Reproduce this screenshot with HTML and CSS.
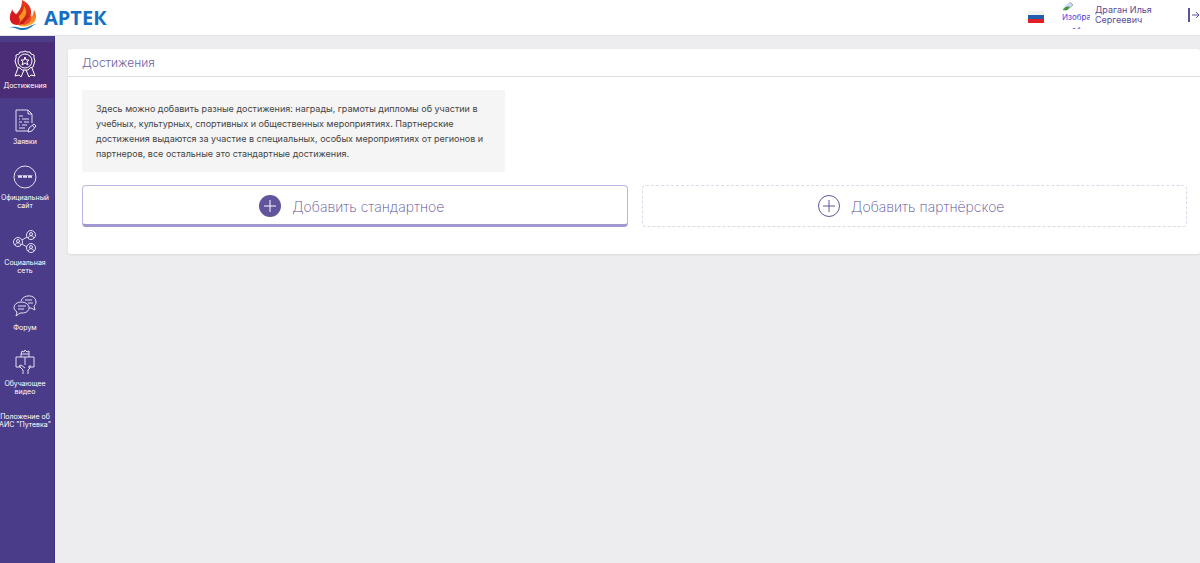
FILE: index.html
```html
<!DOCTYPE html>
<html lang="ru">
<head>
  <meta charset="UTF-8" />
  <meta name="viewport" content="width=device-width, initial-scale=1.0"/>
  <title>Достижения</title>
  <link rel="stylesheet" href="styles.css">
</head>
<body>
  <header class="header">
    <a href="#" class="logo">
      <svg class="logo-flame" width="30" height="32" viewBox="0 0 30 32">
        <defs>
          <linearGradient id="flame" x1="0" y1="0" x2="0" y2="1">
            <stop offset="0" stop-color="#e8401f"/>
            <stop offset="1" stop-color="#c4161c"/>
          </linearGradient>
          <linearGradient id="flame-light" x1="0" y1="0" x2="0" y2="1">
            <stop offset="0" stop-color="#f15a22"/>
            <stop offset="1" stop-color="#fbb034"/>
          </linearGradient>
        </defs>
        <path d="M26 10c4 6 2 13-4 15-4 2-9 2-12 0 8-1 15-6 16-15z" fill="url(#flame-light)"/>
        <path d="M14 0c8 4 11 10 8 17-2 5-6 8-12 8-5-5-4-9 0-13 3-4 4-7 4-12z" fill="url(#flame)"/>
        <path d="M16 6c4 6 2 10-2 14-2 2-3 3-3 5-3-4-1-8 2-11 2-3 3-5 3-8z" fill="#f7941d"/>
        <path d="M4 9c1 4 7 6 8 11 0 2-1 4-3 5-5 0-8-4-7-9 0-3 2-4 2-7z" fill="#d71920"/>
        <path d="M23 13c0 6-6 6-8 12 6 0 10-5 8-12z" fill="#ef4a23"/>
        <path d="M1 28c6-3 9 0 14 0 6 0 8-4 14-4-5 1-7 6-14 6-6 0-9-4-14-2z" fill="#1c75bc"/>
      </svg>
      <span class="logo-text">АРТЕК</span>
    </a>
    <div class="user">
      <a href="#" class="flag" aria-label="Русский">
        <svg width="16" height="12" viewBox="0 0 16 12">
          <rect width="16" height="12" fill="#f0f0f0"/>
          <rect y="4" width="16" height="4" fill="#1f5fae"/>
          <rect y="8" width="16" height="4" fill="#e01f26"/>
        </svg>
      </a>
      <a href="#" class="avatar">
        <svg width="16" height="10" viewBox="0 0 16 10">
          <path d="M1 9V1h7l3 3-6 5z" fill="#c9dbf3" stroke="#a9a9a9"/>
          <path d="M1 9c2-4 5-4 7-3L5 9z" fill="#3f9a35"/>
        </svg>
        <span class="avatar-alt">Изображение</span>
        <span class="avatar-alt avatar-alt-center">профиля</span>
      </a>
      <a href="#" class="user-name">Драган Илья Сергеевич</a>
      <a href="#" class="logout" aria-label="Выход">
        <svg width="12" height="14" viewBox="0 0 12 14" fill="none" stroke="#5f5299">
          <path d="M1 0v14" stroke-width="2"/>
          <path d="M4 7h7M8 4l3 3-3 3"/>
        </svg>
      </a>
    </div>
  </header>

  <div class="layout">
    <nav class="sidebar">
      <a href="#" class="nav-item active">
        <svg class="nav-icon" viewBox="0 0 28 28">
          <path d="M14 1l2 1 3 0 1 2 3 1 0 3 1 3-1 3-1 3-3 1-2 2-3 0-3 0-2-2-3-1-1-3-1-3 1-3 0-3 3-1 1-2 3 0z"/>
          <circle cx="14" cy="11" r="7"/>
          <path d="M14 7l1 3h3l-2 2 1 3-3-2-3 2 1-3-2-2h3z"/>
          <path d="M7 18l-3 8 4-1 2 2 3-7M21 18l3 8-4-1-2 2-3-7"/>
        </svg>
        <span>Достижения</span>
      </a>
      <a href="#" class="nav-item">
        <svg class="nav-icon" viewBox="0 0 28 28">
          <path d="M17 25H5V4h12l4 4v9M17 4v4h4M8 10h4M8 13h1M11 13h7M8 16h3M13 16h5M8 19h1M11 19h5M8 22h6"/>
          <path d="M17 26l1-4 5-4 2 2-4 5zM21 19l3 3"/>
        </svg>
        <span>Заявки</span>
      </a>
      <a href="#" class="nav-item nav-item-tall">
        <svg class="nav-icon" viewBox="0 0 28 28">
          <circle cx="14" cy="15" r="11"/>
          <path d="M7 13l1 3 1-3 1 3 1-3M12 13l1 3 1-3 1 3 1-3M17 13l1 3 1-3 1 3 1-3"/>
        </svg>
        <span>Официальный<br>сайт</span>
      </a>
      <a href="#" class="nav-item nav-item-tall">
        <svg class="nav-icon" viewBox="0 0 28 28">
          <g id="person">
            <circle cx="7" cy="15" r="4.500"/>
            <circle cx="7" cy="14" r="1.500"/>
            <path d="M4 18c1-3 5-3 6 0"/>
          </g>
          <use href="#person" x="13" y="-7"/>
          <use href="#person" x="13" y="6"/>
          <path d="M11 13l5-3M11 17l5 3"/>
        </svg>
        <span>Социальная<br>сеть</span>
      </a>
      <a href="#" class="nav-item">
        <svg class="nav-icon" viewBox="0 0 28 28">
          <path d="M10 9c2-7 15-7 15 1 0 2-1 3-2 4l1 4-4-2h-2"/>
          <path d="M5 24l1-4c-6-4-2-10 4-10 10 0 11 11 1 11H9z"/>
          <path d="M7 14h8M7 17h6M14 8h7M17 11h5"/>
        </svg>
        <span>Форум</span>
      </a>
      <a href="#" class="nav-item nav-item-tall">
        <svg class="nav-icon" viewBox="0 0 28 28">
          <path d="M10 19H5V9h18v10h-6M14 9v8M10 9V6h8v3M10 6l1-3 2 1 1-2 2 2 2-1v3"/>
          <path d="M12 26v-4l-4-4 2-1 4 3M17 26v-4l2-2v-3"/>
        </svg>
        <span>Обучающее<br>видео</span>
      </a>
      <a href="#" class="nav-item">
        <span>Положение об<br>АИС "Путевка"</span>
      </a>
    </nav>

    <main class="content">
      <section class="card">
        <h1 class="card-title">Достижения</h1>
        <div class="card-body">
          <p class="info">Здесь можно добавить разные достижения: награды, грамоты дипломы об участии в учебных, культурных, спортивных и общественных мероприятиях. Партнерские достижения выдаются за участие в специальных, особых мероприятиях от регионов и партнеров, все остальные это стандартные достижения.</p>
          <div class="actions">
            <button type="button" class="add-button standard">
              <svg width="22" height="22" viewBox="0 0 22 22" fill="none">
                <circle cx="11" cy="11" r="11" fill="#62549c"/>
                <path d="M11 5v12M5 11h12" stroke="#fff"/>
              </svg>
              Добавить стандартное
            </button>
            <button type="button" class="add-button">
              <svg width="22" height="22" viewBox="0 0 22 22" fill="none" stroke="#62549c">
                <circle cx="11" cy="11" r="10.500"/>
                <path d="M11 5v12M5 11h12"/>
              </svg>
              Добавить партнёрское
            </button>
          </div>
        </div>
      </section>
    </main>
  </div>
</body>
</html>
```
FILE: styles.css
```css
* {
  box-sizing: border-box;
}
body {
  margin: 0;
  min-height: 100vh;
  display: flex;
  flex-direction: column;
  background: #ededef;
  font-family: Inter, 'Liberation Sans', sans-serif;
  overflow-x: hidden;
}
a {
  color: inherit;
  text-decoration: none;
}
.header {
  display: flex;
  justify-content: space-between;
  height: 36px;
  background: #fff;
  border-bottom: 1px solid #e2e2e8;
}
.logo {
  display: flex;
  align-items: center;
  gap: 6px;
  padding-left: 8px;
  color: #1570c4;
}
.logo-flame {
  margin-bottom: 4px;
}
.logo-text {
  font-family: 'Open Sans', sans-serif;
  font-size: 20px;
  font-weight: 700;
}
.user {
  display: flex;
  align-items: center;
  color: #574b92;
}
.flag {
  display: flex;
  margin: 0 18px 2px 0;
}
.avatar {
  width: 28px;
  height: 28px;
  margin: 0 5px 6px 0;
  border-radius: 50%;
  overflow: hidden;
  color: #4a3ce0;
  font-size: 8px;
  line-height: 13px;
}
.avatar svg,
.avatar-alt {
  display: block;
}
.avatar-alt {
  white-space: nowrap;
}
.avatar-alt-center {
  text-align: center;
}
.user-name {
  width: 93px;
  margin-bottom: 6px;
  padding-right: 30px;
  font-size: 9px;
  line-height: 10px;
}
.logout {
  display: flex;
  margin-bottom: 6px;
}
.layout {
  display: flex;
  flex: 1;
}
.sidebar {
  width: 55px;
  flex-shrink: 0;
  padding: 6px 0;
  background: #4a3c88;
  border-right: 1px solid #3f2f7c;
  overflow: hidden;
}
.nav-item {
  display: flex;
  flex-direction: column;
  align-items: center;
  gap: 4px;
  padding: 8px 4px 8px 0;
  color: #fff;
  font-size: 7px;
  line-height: 8px;
  text-align: center;
  white-space: nowrap;
}
.nav-item.active {
  background: #4a2d76;
}
.nav-item-tall {
  padding-bottom: 9px;
}
.nav-icon {
  width: 28px;
  height: 28px;
  fill: none;
  stroke: #e4dff2;
  stroke-width: 1;
}
.active .nav-icon {
  stroke: #fff;
}
.content {
  flex: 1;
  min-width: 0;
  padding: 13px 0 13px 13px;
}
.card {
  background: #fff;
  border-radius: 3px;
  box-shadow: 0 1px 3px rgba(0, 0, 0, 0.08);
}
.card-title {
  margin: 0;
  padding: 0 14px;
  border-bottom: 1px solid #dedee6;
  color: #6a5fa3;
  font-size: 12px;
  font-weight: 300;
  line-height: 27px;
}
.card-body {
  padding: 13px 13px 27px 14px;
}
.info {
  max-width: 423px;
  margin: 0 0 13px;
  padding: 11px 14px;
  border-radius: 2px;
  background: #f5f5f5;
  color: #444;
  font-size: 9px;
  line-height: 15px;
}
.actions {
  display: grid;
  grid-template-columns: 1fr 1fr;
  gap: 14px;
}
.add-button {
  display: flex;
  align-items: center;
  justify-content: center;
  gap: 11px;
  height: 42px;
  padding: 0 6px 0 0;
  border: 1px dashed #dcd9e8;
  border-radius: 4px;
  background: #fff;
  color: #5a4d96;
  font-family: inherit;
  font-size: 14px;
  font-weight: 200;
  cursor: pointer;
}
.add-button.standard {
  padding-top: 2px;
  border: 1px solid #bdb5df;
  border-bottom: 3px solid #a297d0;
}
```
